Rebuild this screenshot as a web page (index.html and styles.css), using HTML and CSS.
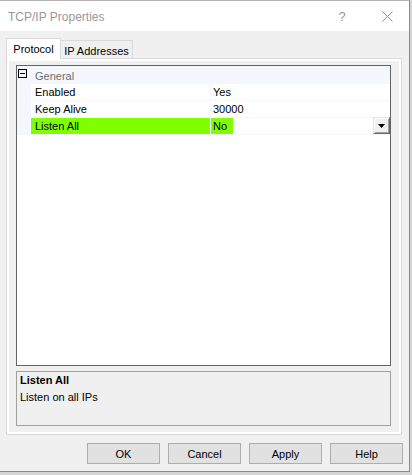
FILE: index.html
```html
<!DOCTYPE html>
<html>
<head>
    <meta charset="UTF-8">
    <title>TCP/IP Properties</title>
    <link rel="stylesheet" href="styles.css">
</head>
<body>
    <div class="window">
        <div class="titlebar">
            <span class="title">TCP/IP Properties</span>
            <span class="caption-btn help">?</span>
            <span class="caption-btn close">
                <svg width="11" height="11" viewBox="0 0 11 11"><path d="M0.5 0.5L10.5 10.5M10.5 0.5L0.5 10.5" stroke="#8f8f8f" stroke-width="1" fill="none"/></svg>
            </span>
        </div>

        <div class="client">
            <div class="tabs">
                <div class="tab active">Protocol</div>
                <div class="tab">IP Addresses</div>
            </div>

            <div class="tab-page">
                <!-- property grid -->
                <div class="grid">
                    <div class="category">
                        <span class="expander"></span>
                        <span class="category-name">General</span>
                    </div>
                    <div class="row">
                        <div class="margin"></div>
                        <div class="label">Enabled</div>
                        <div class="value"><span class="value-text">Yes</span></div>
                    </div>
                    <div class="row">
                        <div class="margin"></div>
                        <div class="label">Keep Alive</div>
                        <div class="value"><span class="value-text">30000</span></div>
                    </div>
                    <div class="row selected">
                        <div class="margin"></div>
                        <div class="label">Listen All</div>
                        <div class="value">
                            <span class="value-text">No</span>
                            <span class="drop-btn">
                                <svg width="7" height="4" viewBox="0 0 7 4"><polygon points="0,0 7,0 3.5,4" fill="#000"/></svg>
                            </span>
                        </div>
                    </div>
                </div>

                <!-- help pane -->
                <div class="description">
                    <div class="desc-title">Listen All</div>
                    <div class="desc-text">Listen on all IPs</div>
                </div>
            </div>

            <div class="buttons">
                <button class="btn">OK</button>
                <button class="btn">Cancel</button>
                <button class="btn">Apply</button>
                <button class="btn">Help</button>
            </div>
        </div>
    </div>
</body>
</html>
```

FILE: styles.css
```css
* {
    box-sizing: border-box;
    margin: 0;
    padding: 0;
}
body {
    font-family: "Liberation Sans", Arial, sans-serif;
    font-size: 11px;
    color: #000;
    background-color: #d6d6d6;
    width: 412px;
    height: 475px;
    overflow: hidden;
}
.window {
    width: 410px;
    height: 472px;
    background-color: #f0f0f0;
    border-top: 1px solid #b4b4b4;
    border-right: 1px solid #8a8a8a;
    border-bottom: 1px solid #8a8a8a;
    display: flex;
    flex-direction: column;
}
.titlebar {
    height: 30px;
    background-color: #fff;
    display: flex;
    align-items: center;
}
.title {
    flex: 1;
    padding-left: 8px;
    padding-top: 2px;
    font-size: 12px;
    color: #999;
}
.caption-btn {
    display: flex;
    align-items: center;
    justify-content: center;
    height: 30px;
    color: #999;
}
.help {
    width: 46px;
    font-size: 13px;
    padding-top: 1px;
}
.close {
    width: 44px;
    padding-top: 1px;
}
.client {
    flex: 1;
    padding: 7px 0 0 6px;
    display: flex;
    flex-direction: column;
}
.tabs {
    display: flex;
    align-items: flex-end;
    height: 21px;
    margin-bottom: -1px;
}
.tab {
    height: 18px;
    width: 72px;
    margin-bottom: 1px;
    padding-top: 2px;
    background-color: #f0f0f0;
    border-top: 1px solid #d9d9d9;
    border-right: 1px solid #d9d9d9;
    display: flex;
    align-items: center;
    justify-content: center;
}
.tab.active {
    position: relative;
    z-index: 1;
    height: 21px;
    width: 55px;
    margin-bottom: 0;
    padding-top: 0;
    padding-bottom: 1px;
    background-color: #fff;
    border-left: 1px solid #d9d9d9;
}
.tab-page {
    width: 396px;
    height: 377px;
    border: 1px solid #d9d9d9;
    box-shadow: inset 0 0 0 2px #fff;
    padding: 6px 10px 8px 9px;
    display: flex;
    flex-direction: column;
}
.grid {
    height: 301px;
    background-color: #fff;
    border: 1px solid #646464;
}
.category {
    height: 18px;
    background-color: #f4f7fc;
    display: flex;
    align-items: flex-start;
}
.expander {
    width: 9px;
    height: 9px;
    margin: 3px 0 0 1px;
    border: 1px solid #000;
    position: relative;
}
.expander::after {
    content: "";
    position: absolute;
    left: 1px;
    top: 3px;
    width: 5px;
    height: 1px;
    background-color: #000;
}
.category-name {
    margin-left: 8px;
    line-height: 18px;
    padding-top: 1px;
    color: #6d6d6d;
}
.row {
    height: 17px;
    display: flex;
    border-bottom: 1px solid #f4f7fc;
    line-height: 16px;
}
.margin {
    width: 14px;
    background-color: #f4f7fc;
}
.label {
    width: 179px;
    padding-left: 4px;
}
.value {
    flex: 1;
    display: flex;
    border-left: 1px solid #f4f7fc;
}
.value-text {
    padding: 0 6px 0 2px;
}
.selected .label,
.selected .value-text {
    background-color: #80ff00;
}
.drop-btn {
    margin-left: auto;
    margin-top: -1px;
    width: 17px;
    height: 17px;
    background-color: #f0f0f0;
    border: 1px solid;
    border-color: #e3e3e3 #696969 #696969 #e3e3e3;
    box-shadow: inset 1px 1px #fff, inset -1px -1px #a0a0a0;
    display: flex;
    align-items: center;
    justify-content: center;
    padding-top: 1px;
}
.description {
    margin-top: 5px;
    height: 55px;
    border: 1px solid #a0a0a0;
    background-color: #f0f0f0;
    padding: 0 3px;
    line-height: 17px;
}
.desc-title {
    font-weight: bold;
}
.buttons {
    display: flex;
    justify-content: flex-end;
    gap: 8px;
    margin-top: 8px;
    padding-right: 6px;
}
.btn {
    width: 73px;
    height: 21px;
    font-family: "Liberation Sans", Arial, sans-serif;
    font-size: 11px;
    color: #000;
    background-color: #e1e1e1;
    border: 1px solid #adadad;
}
```
